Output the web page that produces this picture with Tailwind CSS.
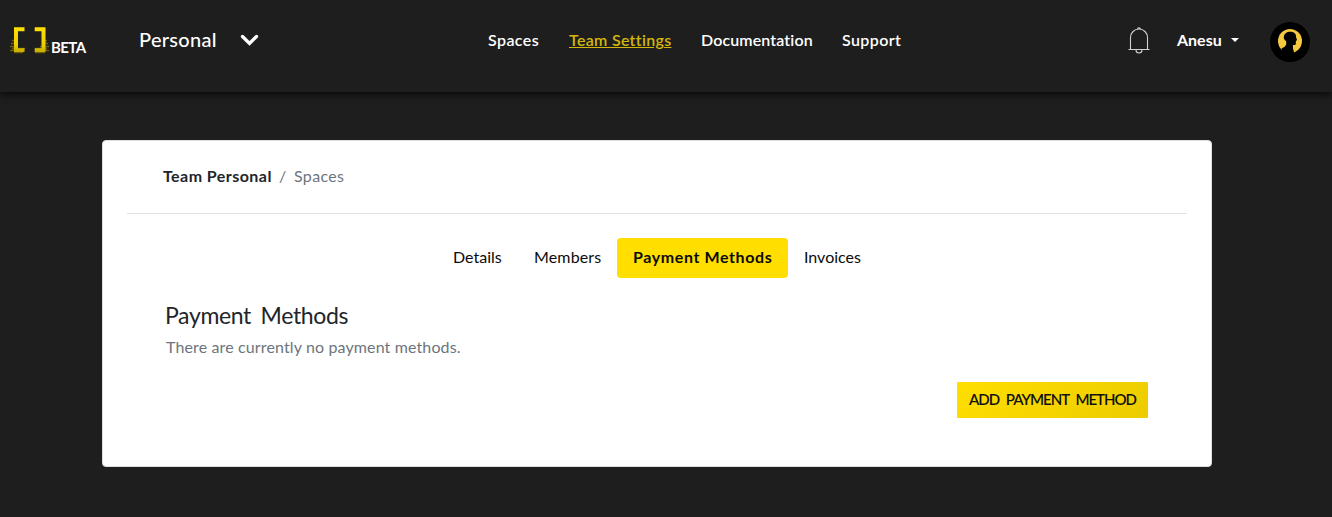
<!DOCTYPE html>
<html lang="en">
<head>
<meta charset="utf-8">
<title>Payment Methods</title>
<script src="https://cdn.jsdelivr.net/npm/@tailwindcss/browser@4"></script>
</head>
<body class="h-[517px] overflow-hidden bg-[#1e1e1e] font-['Lato',sans-serif] text-base leading-6">
<header class="relative flex h-[92px] items-start bg-[#1e1e1e] text-white shadow-[0_2px_8px_rgba(0,0,0,0.8)]">
  <a class="ml-[9px] mt-[26px] flex w-[130px] items-start">
    <svg class="h-[29px] w-[42px] shrink-0" viewBox="0 0 42 29">
      <defs><linearGradient id="g" x1="0" y1="0" x2="0" y2="1"><stop offset="0" stop-color="#ffe000"/><stop offset=".7" stop-color="#ecd000"/><stop offset="1" stop-color="#c4ac00"/></linearGradient></defs>
      <path stroke="#8d7b08" stroke-opacity=".7" stroke-width="1.300" fill="none" d="M3 14.500h3M2 17.500h4M1 20.500h8M3 22.500h13M1 24.500h12M5 26.700h9M35 14.500h3M34 17.500h5M31 20.500h9M26 22.500h12M29 24.500h11M26 26.700h10"/>
      <path fill="url(#g)" d="M5 1.300h10.500v4H9v17h6.500V26H5zM25.700 1.300h10.800V26H25.700v-3.700h6.800v-17h-6.800z"/>
    </svg>
    <span class="mt-[9px] text-[15px] font-bold leading-6 tracking-[-0.600px]">BETA</span>
  </a>
  <div class="mt-[24px] flex items-center">
    <span class="w-[101px] text-[20px] font-medium leading-[30px] tracking-[0.300px] whitespace-nowrap">Personal</span>
    <svg class="mt-[2px] h-[13px] w-[19px]" viewBox="0 0 19 13"><path d="M2.500 2.500l7 7 7-7" fill="none" stroke="#fff" stroke-width="3.300" stroke-linecap="round" stroke-linejoin="miter"/></svg>
  </div>
  <nav class="ml-[229px] mt-[28px] flex font-semibold whitespace-nowrap">
    <span class="w-[81px] tracking-[0.400px]">Spaces</span>
    <span class="w-[132px] tracking-[0.300px]"><span class="text-[#d3b70a] underline">Team Settings</span></span>
    <span class="w-[141px] tracking-[0.120px]">Documentation</span>
    <span class="w-[286px] tracking-[0.400px]">Support</span>
  </nav>
  <svg class="mt-[27px] h-[28px] w-[22px]" viewBox="0 0 22 28" fill="none" stroke="#d0d0d0" stroke-width="1.100"><path d="M2.500 22V10.500a8.500 8.500 0 0 1 17 0V22M.5 22.500h21M8 23a3 3 0 0 0 6 0M9.500 2.200a1.500 1.500 0 0 1 3 0"/></svg>
  <span class="ml-[27px] mt-[28px] flex w-[93px] items-center font-bold"><span class="w-[54px]">Anesu</span><svg class="h-[4px] w-[8px]" viewBox="0 0 8 4"><path d="M0 0h8L4 4z" fill="#fff"/></svg></span>
  <svg class="mt-[22px] h-10 w-10" viewBox="0 0 40 40"><circle cx="20" cy="20" r="20"/><circle cx="20" cy="19" r="12" fill="#f5c93d"/><path d="M13.800 15.500c0-3.700 3-5.700 6.500-5.700 3.900 0 5.900 2.200 5.700 5.200l1.100 3.200-1.200.6-.1 2.900c-.2 1.300-1.400 1.500-2.900 1.400l.1 3.400 1.500 5.500H13l-1.500-5.500 3.500-2 1.200-2v-3.500c-1.500-.7-2.300-1.800-2.400-3.500z"/></svg>
</header>
<main class="ml-[102px] mt-[48px] h-[327px] w-[1110px] rounded-[4px] border border-[#dfdfdf] bg-white px-6 whitespace-nowrap">
  <div class="flex h-[73px] border-b border-[#dee2e6] pl-9 pt-[23px]">
    <b class="w-[116px] tracking-[0.450px] text-[#212529]">Team Personal</b><span class="w-[15px] text-[#6c757d]">/</span><span class="tracking-[0.350px] text-[#6c757d]">Spaces</span>
  </div>
  <div class="mt-6 flex h-10 pl-[326px] leading-[38px] text-[#0b0b0b]">
    <span class="w-[81px]">Details</span><span class="w-[83px] tracking-[0.150px]">Members</span><span class="w-[171px] rounded-[4px] bg-[#ffde00] pl-4"><b class="tracking-[0.600px]">Payment Methods</b></span><span class="pl-4">Invoices</span>
  </div>
  <div class="pl-[38px] pt-[23px]">
    <h4 class="text-[23px] leading-[29px] tracking-[-0.350px] text-[#212529] [word-spacing:4px]">Payment Methods</h4>
    <p class="mt-[5px] pl-px tracking-[0.130px] text-[#6c757d]">There are currently no payment methods.</p>
  </div>
  <div class="mt-[23px] flex justify-end pr-[39px]">
    <button class="h-9 w-[191px] rounded-[1px] bg-linear-[135deg] from-[#ffde00] to-[#eccc00] pb-[2px] text-[15px] font-semibold tracking-[-1px] text-[#111] [word-spacing:4px]">ADD PAYMENT METHOD</button>
  </div>
</main>
</body>
</html>
